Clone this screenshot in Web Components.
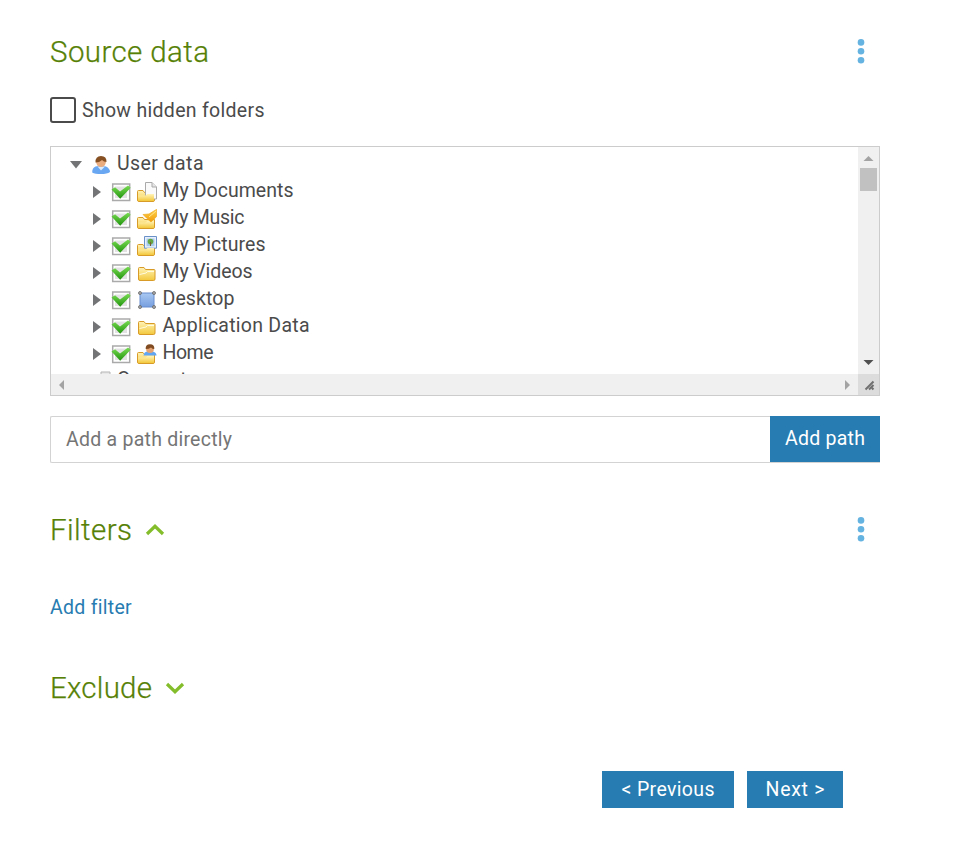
<!DOCTYPE html>
<html lang="en"><head><meta charset="utf-8"><title>Source data</title>
<style>
body{margin:0;background:#fff;color:#4b4b4b;font:19.5px/27px Roboto,"Noto Sans",sans-serif}
</style></head><body>
<source-page></source-page>
<script>
const define=(name,html,setup)=>customElements.define(name,class extends HTMLElement{
  constructor(){super();this.attachShadow({mode:'open'});}
  connectedCallback(){this.shadowRoot.innerHTML=html;if(setup)setup(this,this.shadowRoot);}
});

/* Label tracked to an exact width given by the w attribute */
define('fit-text','<style>:host{display:inline-block;white-space:pre;flex:none}span{display:inline-block}</style><span><slot></slot></span>',(el,r)=>{
  const s=r.querySelector('span'),w=+el.getAttribute('w'),n=el.textContent.length;
  s.style.letterSpacing=(w-s.getBoundingClientRect().width)/(n-1)+'px';
  el.style.width=w+'px';
});

define('more-menu','<style>:host{display:block;width:8px;height:26px}svg{display:block}</style><svg width="8" height="26" fill="#65b3e0"><circle cx="4" cy="3.400" r="3.3"/><circle cx="4" cy="12.300" r="3.3"/><circle cx="4" cy="21.200" r="3.3"/></svg>');

define('section-heading',`<style>:host{display:flex;height:40px;align-items:center;justify-content:space-between;padding-right:15px}
h2{margin:0;font-weight:300;font-size:29.5px;line-height:40px;color:#568106;-webkit-text-stroke:.25px #568106;display:flex;align-items:center;gap:13px}</style>
<h2><slot></slot></h2><slot name="menu"></slot>`);

define('chevron-icon','<style>:host{display:block;width:20px;height:14px}svg{display:block}:host([down]) svg{transform:rotate(180deg)}</style><svg width="20" height="14" fill="none" stroke="#84bd2b" stroke-width="3.2"><path d="M2 11 10 3.3 18 11"/></svg>');

define('blue-button',`<style>:host{display:block;flex:none}button{display:flex;align-items:center;justify-content:center;width:100%;height:100%;margin:0;padding:0 0 1px;border:0;background:#277cb1;color:#fff;font:inherit}</style><button><slot></slot></button>`);

define('check-option',`<style>:host{display:flex;align-items:center;gap:6px;height:26px}i{box-sizing:border-box;width:26px;height:26px;border:2px solid #4b4b4b;border-radius:3px}</style><i></i><slot></slot>`);

const defs=`<defs><linearGradient id="f" x2="0" y2="1"><stop stop-color="#fff3b8"/><stop offset="1" stop-color="#f3c83b"/></linearGradient>
<linearGradient id="g" x2="0" y2="1"><stop stop-color="#7add53"/><stop offset="1" stop-color="#20930d"/></linearGradient>
<linearGradient id="b" x2="0" y2="1"><stop stop-color="#a9c9f2"/><stop offset="1" stop-color="#789fdf"/></linearGradient>
<linearGradient id="o" x2="0" y2="1"><stop stop-color="#ffd64f"/><stop offset="1" stop-color="#f29a08"/></linearGradient></defs>`;
const smallFolder='<path d="M.5 18V9.500q0-1 1-1h4.500l1.500 2h10V18q0 1.500-1.500 1.500H2Q.500 19.500.500 18Z" fill="url(#f)" stroke="#d89b27"/>';
const front='<path d="M1 13.500h7.500l2-1.500H17v6q0 1-1 1H2q-1 0-1-1Z" fill="url(#f)"/>';
const art={
 user:'<path d="M1.200 17.500Q1 13 4.500 11.500l5.500-1 5 1Q19 13.500 19 17q-3 2-9 2t-8.800-1.500Z" fill="#69a7f2"/><path d="M6.500 11.500 10 15.500l4-4" fill="#d9ebff"/><circle cx="10" cy="7.300" r="4.800" fill="#e9ad80"/><path d="M4.500 7.500Q4.200 1 10 1t5.500 6q-2.800 0-4.500-2Q8.500 7.500 4.500 7.500Z" fill="#865023"/>',
 folder:'<path d="M1.500 16V5.500q0-1 1-1H7l1.500 2H17q1 0 1 1V16q0 1.500-1.500 1.500H3q-1.500 0-1.500-1.500Z" fill="url(#f)" stroke="#d89b27"/><path d="M2.500 11.500 9 10l1.500-1.500H17" fill="none" stroke="#fffbe0"/>',
 docs:smallFolder+'<path d="M8.500.5H15l4.500 4.500v12h-11Z" fill="#fafafa" stroke="#aaa"/><path d="M15 .5V5h4.500" fill="#e6e6e6" stroke="#aaa"/>'+front,
 music:smallFolder+front+'<path d="M6 5.500 12 5l7.700-4.700v7.200L14 13 9.500 9Z" fill="url(#o)" stroke="#edaa24" stroke-width=".7"/><path d="m12 8 7-6" stroke="#ffe690"/>',
 pics:smallFolder+'<path d="M7.500.5h12v11.700h-12Z" fill="#e7f0fb" stroke="#6b91c9"/><path d="M9.500 2.500h8v7.700h-8Z" fill="#a9cbea"/><circle cx="13.500" cy="5.600" r="2.800" fill="#65a642"/><path d="M13.500 6v4" stroke="#795e35"/>'+front,
 desktop:'<path d="M3 3h14v14H3Z" fill="url(#b)" stroke="#668cce"/><g fill="#aaa" stroke="#666" stroke-width=".8"><circle cx="3" cy="3" r="1.500"/><circle cx="17" cy="3" r="1.500"/><circle cx="3" cy="17" r="1.500"/><circle cx="17" cy="17" r="1.500"/></g>',
 home:smallFolder+front+'<path d="M6.500 11.500q.5-3.500 3.500-4h6q3.500 1 3.500 4Z" fill="#60a5f3"/><circle cx="13" cy="5" r="3.900" fill="#e5a374"/><path d="M8.700 5Q8.300.2 13 .2T17.300 5q-2 0-3.300-1.500Q12 5 8.700 5Z" fill="#804b20"/>',
 computer:'<path d="M10 1h9v17h-9Z" fill="#e8e8e8" stroke="#b5b5b5"/>'
};
define('tree-row',`<style>:host{display:flex;height:27px;align-items:center}
.arrow,.check,.icon{flex:none;display:block;position:relative}.arrow{width:12px;height:12px;margin-right:8px;top:1px}.check{width:20px;height:20px;margin-right:6px;top:1px}.icon{width:20px;height:20px;top:1px}.label{margin-left:5.500px}</style>
<svg class="arrow"></svg><svg class="check" viewBox="0 0 20 20">${defs}<path d="M1.700 2h17v16.500h-17Z" fill="#fff" stroke="#aaa" stroke-width="1.500"/><path d="M4 4.500h12v11.500H4Z" fill="#e2e2e2"/><path d="M.5 7.500 4 5.300l5 4.200L17 3.500l2.700 2.300L9.200 16.800Z" fill="url(#g)"/></svg><svg class="icon" viewBox="0 0 20 20"></svg><div class="label"><slot></slot></div>`,(el,r)=>{
  const root=el.hasAttribute('root'),kind=el.getAttribute('icon');
  el.style.paddingLeft=root?'19px':'40px';
  r.querySelector('.arrow').innerHTML=kind==='computer'?'':root?'<path d="M0 2h12L6 9.500Z" fill="#727475"/>':'<path d="M2 0v12l8-6Z" fill="#727475"/>';
  r.querySelector('.icon').innerHTML=defs+art[kind];
  if(root){r.querySelector('.check').remove();r.querySelector('.arrow').style.marginRight='9px';r.querySelector('.label').style.marginLeft='6px';}
});

define('source-tree',`<style>:host{box-sizing:border-box;display:grid;grid-template:227px 21px/1fr 21px;width:830px;height:250px;border:1px solid #ccc}
.rows{overflow:hidden;padding-top:3px;box-sizing:border-box}.v{background:#f0f0f0;display:flex;flex-direction:column;align-items:center}.thumb{width:17px;height:23px;background:#c1c1c1}.h{background:#f0f0f0;display:flex;justify-content:space-between;align-items:center;padding:0 7px}.corner{background:#dcdcdc}svg{display:block}.down{margin-top:auto}</style>
<div class="rows"><slot></slot></div>
<div class="v"><svg width="21" height="21"><path d="M5.500 14h10L10.500 9Z" fill="#a3a3a3"/></svg><div class="thumb"></div><svg class="down" width="21" height="21"><path d="M5.500 7h10l-5 5Z" fill="#505050"/></svg></div>
<div class="h"><svg width="7" height="10"><path d="M6 0v10L1 5Z" fill="#a3a3a3"/></svg><svg width="7" height="10"><path d="M1 0v10l5-5Z" fill="#a3a3a3"/></svg></div>
<div class="corner"><svg width="21" height="21" fill="none" stroke="#707070" stroke-width="2"><path d="m7.500 15.500 8-8m-4.500 8 4.500-4.500m-1.500 4.500 1.500-1.500"/></svg></div>`);

define('path-field',`<style>:host{display:flex;height:47px}.field{box-sizing:border-box;flex:1;border:1px solid #d3d3d3;border-right:0;border-radius:2px 0 0 2px;padding:0 15px;display:flex;align-items:center;color:#757575}
.end{border-bottom:1px solid #d3d3d3}blue-button{width:110px;height:46px}</style><div class="field"><fit-text w="166">Add a path directly</fit-text></div><div class="end"><blue-button><fit-text w="80">Add path</fit-text></blue-button></div>`);

define('source-page',`<style>:host{display:flex;flex-direction:column;box-sizing:border-box;width:977px;height:843px;padding:32px 97px 0 50px}
check-option{margin:25px 0 23px}path-field{margin-top:20px}.filters{margin-top:47px}.link{margin:44px 0 47px;color:#277cb1;height:27px}.actions{display:flex;justify-content:flex-end;gap:13px;margin:63px 37px 0 0}.actions blue-button{height:37px}</style>
<section-heading><fit-text w="159">Source data</fit-text><more-menu slot="menu"></more-menu></section-heading>
<check-option><fit-text w="182.5">Show hidden folders</fit-text></check-option>
<source-tree>
<tree-row root icon="user"><fit-text w="86.5">User data</fit-text></tree-row>
<tree-row icon="docs"><fit-text w="131">My Documents</fit-text></tree-row>
<tree-row icon="music"><fit-text w="82">My Music</fit-text></tree-row>
<tree-row icon="pics"><fit-text w="103">My Pictures</fit-text></tree-row>
<tree-row icon="folder"><fit-text w="90">My Videos</fit-text></tree-row>
<tree-row icon="desktop"><fit-text w="72">Desktop</fit-text></tree-row>
<tree-row icon="folder"><fit-text w="147">Application Data</fit-text></tree-row>
<tree-row icon="home"><fit-text w="51">Home</fit-text></tree-row>
<tree-row root icon="computer"><fit-text w="87">Computer</fit-text></tree-row>
</source-tree>
<path-field></path-field>
<section-heading class="filters"><fit-text w="82">Filters</fit-text><chevron-icon></chevron-icon><more-menu slot="menu"></more-menu></section-heading>
<div class="link"><fit-text w="81">Add filter</fit-text></div>
<section-heading><fit-text w="102">Exclude</fit-text><chevron-icon down></chevron-icon></section-heading>
<div class="actions"><blue-button style="width:132px"><fit-text w="93">&lt; Previous</fit-text></blue-button><blue-button style="width:96px"><fit-text w="59">Next &gt;</fit-text></blue-button></div>`);
</script></body></html>
